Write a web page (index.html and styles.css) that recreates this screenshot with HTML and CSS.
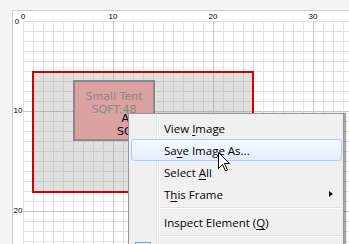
FILE: index.html
```html
<!DOCTYPE html>
<html lang="en">
<head>
  <meta charset="UTF-8" />
  <title>Site Plan</title>
  <link rel="stylesheet" href="styles.css">
</head>
<body>

  <div class="frame">
    <div class="grid"></div>

    <!-- ruler labels -->
    <span class="tick top first">0</span>
    <span class="tick top" style="left: 100px">10</span>
    <span class="tick top" style="left: 200px">20</span>
    <span class="tick top" style="left: 300px">30</span>
    <span class="tick left first">0</span>
    <span class="tick left" style="top: 100px">10</span>
    <span class="tick left" style="top: 200px">20</span>

    <!-- shapes -->
    <div class="area"></div>
    <div class="tent">Small Tent<br>SQFT:48</div>
    <!-- the menu covers the right part of this label -->
    <div class="area-clip">
      <div class="area-label">Arena 1<br>SQFT:264</div>
    </div>
  </div>

  <ul class="menu">
    <li class="item">View <u>I</u>mage</li>
    <li class="item active">Sa<u>v</u>e Image As...</li>
    <li class="item">Select <u>A</u>ll</li>
    <li class="item sub">T<u>h</u>is Frame</li>
    <li class="sep"></li>
    <li class="item">Inspect Element (<u>Q</u>)</li>
    <li class="sep"></li>
    <li class="item"><span class="icon"></span></li>
  </ul>

  <svg class="cursor" width="13" height="20" viewBox="0 0 13 20">
    <path d="M0.5 0.5 L0.5 16.5 L4.5 12.5 L7.5 19 L9.5 18 L6.5 11.5 L11.5 11.5 Z" fill="#fff" stroke="#000" stroke-width="1"/>
  </svg>

</body>
</html>
```

FILE: styles.css
```css
html, body {
  margin: 0;
  padding: 0;
}

body {
  width: 349px;
  height: 244px;
  overflow: hidden;
  background: #f5f5f5;
  position: relative;
  font-family: "DejaVu Sans", Verdana, sans-serif;
}

.frame {
  position: relative;
  margin: 10px 0 0 12px;
  height: 233px;
  background: #fff;
  border-left: 1px solid #cdcdcd;
  border-top: 1px solid #cdcdcd;
}

.grid {
  margin: 10px 0 0 10px;
  height: 223px;
  background-image:
    linear-gradient(to right, #c8c8c8 1px, transparent 1px),
    linear-gradient(to bottom, #c8c8c8 1px, transparent 1px),
    linear-gradient(to right, #e0e0e0 1px, transparent 1px),
    linear-gradient(to bottom, #e0e0e0 1px, transparent 1px);
  background-size: 100px 100%, 100% 100px, 10px 100%, 100% 10px;
  background-position: 90px 0, 0 90px, 0 0, 0 0;
}

.tick {
  position: absolute;
  font-family: "Liberation Sans", Arial, sans-serif;
  font-size: 8px;
  line-height: 10px;
  color: #000;
}
.tick.top {
  top: 1px;
  width: 20px;
  margin-left: -10px;
  text-align: center;
}
.tick.top.first {
  left: 10px;
}
.tick.left {
  left: 0;
  width: 10px;
  margin-top: -5px;
  text-align: center;
}
.tick.left.first {
  top: 11px;
  margin-left: -1px;
}

.area {
  position: absolute;
  left: 19px;
  top: 60px;
  width: 222px;
  height: 122px;
  box-sizing: border-box;
  border: 2px solid #d40000;
  background: rgba(150, 150, 150, 0.3);
}

.tent {
  position: absolute;
  left: 60px;
  top: 69px;
  width: 82px;
  height: 61px;
  box-sizing: border-box;
  border: 2px solid #8a8a8a;
  background: #dca2a2;
  color: #878787;
  font-size: 11px;
  line-height: 13px;
  text-align: center;
  padding-top: 8px;
}

.area-clip {
  position: absolute;
  left: 19px;
  top: 101px;
  width: 96px;
  height: 28px;
  overflow: hidden;
}
.area-label {
  width: 222px;
  color: #000;
  font-size: 11px;
  line-height: 13px;
  text-align: center;
}

/* context menu */
.menu {
  position: absolute;
  left: 128px;
  top: 113px;
  width: 216px;
  height: 131px;
  overflow: hidden;
  box-sizing: border-box;
  margin: 0;
  padding: 3px 1px 0 2px;
  list-style: none;
  background: #f0f0f0;
  border: 1px solid #979797;
  border-bottom: 0;
  box-shadow: 2px 0 1px rgba(0, 0, 0, 0.35);
  font-family: "Segoe UI", "Open Sans", sans-serif;
  font-size: 11.5px;
  color: #000;
}
.menu::before {
  content: "";
  position: absolute;
  left: 27px;
  top: 0;
  bottom: 0;
  width: 1px;
  background: #e2e3e3;
  border-right: 1px solid #fff;
}

.item {
  position: relative;
  height: 22px;
  line-height: 21px;
  padding-left: 32px;
  box-sizing: border-box;
  border: 1px solid transparent;
  border-radius: 3px;
}
.item u {
  text-decoration-thickness: 1px;
  text-underline-offset: 2px;
}
.item.active {
  border-color: #b0cdef;
  background: linear-gradient(to bottom, #f5f9fe, #e3eefb);
}
.item.sub::after {
  content: "";
  position: absolute;
  right: 8px;
  top: 7px;
  border-left: 4px solid #000;
  border-top: 3.5px solid transparent;
  border-bottom: 3.5px solid transparent;
}

.sep {
  position: relative;
  height: 6px;
  margin-left: 29px;
}
.sep::before {
  content: "";
  position: absolute;
  left: 0;
  right: 0;
  top: 2px;
  height: 1px;
  background: #e0e0e0;
  border-bottom: 1px solid #fff;
}

.icon {
  position: absolute;
  left: 3px;
  top: 2px;
  width: 14px;
  height: 13px;
  border: 1px solid #7d9cc4;
  background: #e9f1fb;
}

.cursor {
  position: absolute;
  left: 218px;
  top: 152px;
}
```
